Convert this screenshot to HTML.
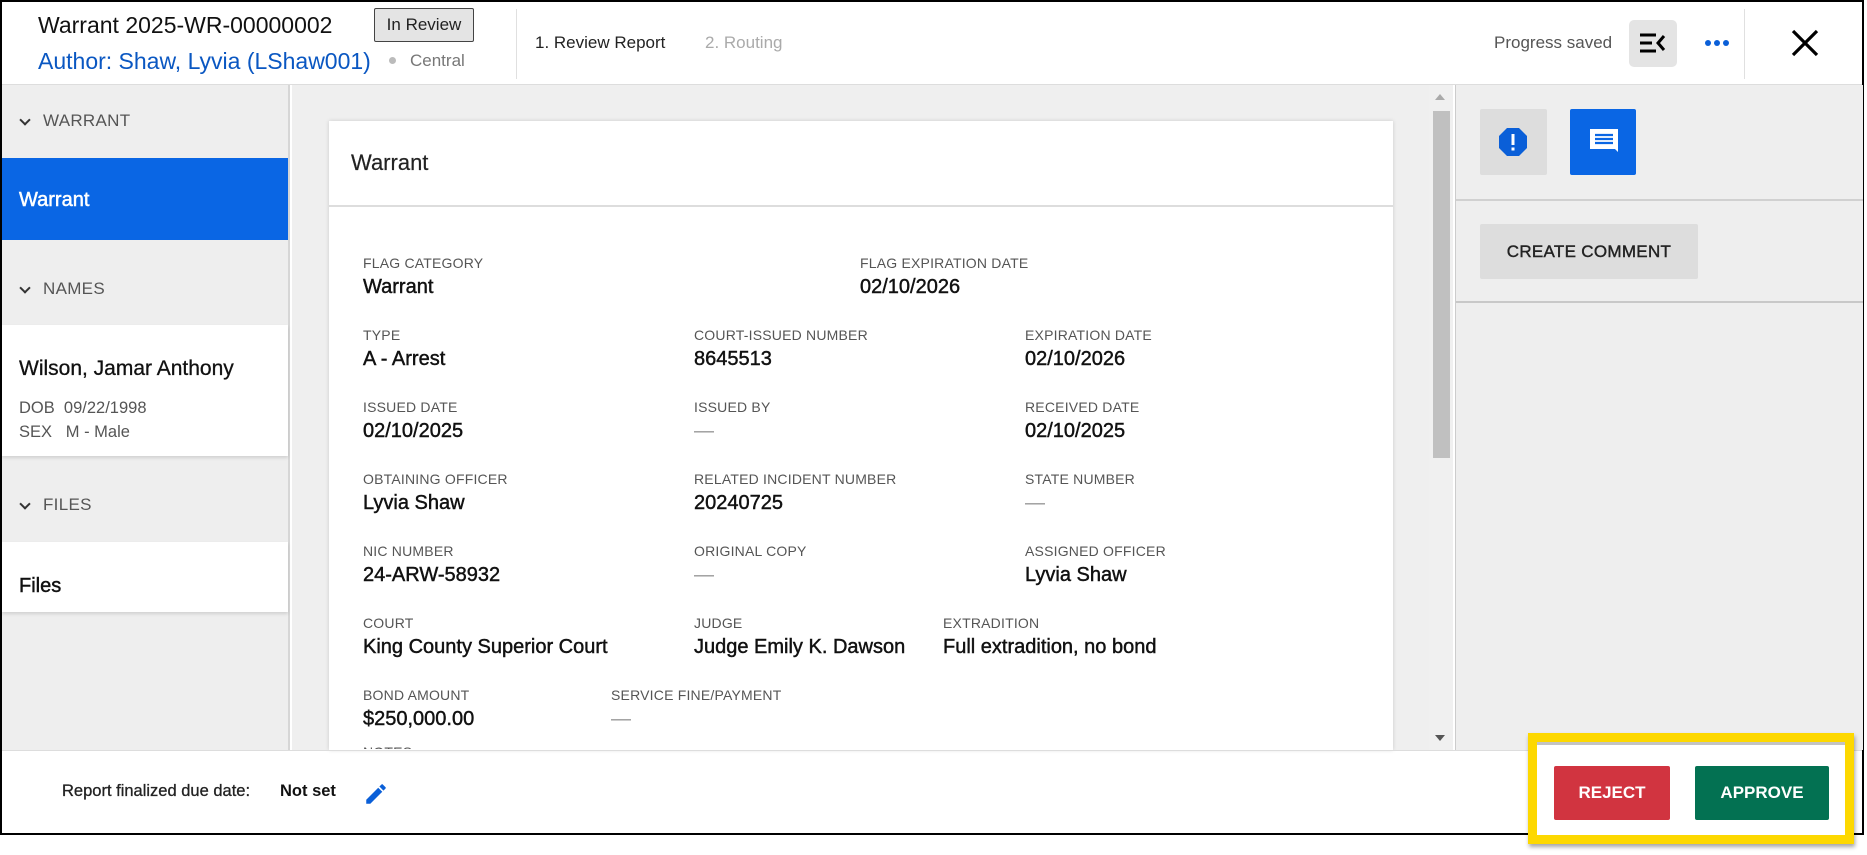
<!DOCTYPE html>
<html><head><meta charset="utf-8"><style>
*{box-sizing:border-box;margin:0;padding:0}
body{width:1867px;height:855px;background:#fff;font-family:"Liberation Sans",Arial,sans-serif;position:relative;overflow:hidden;color:#111}
.a{position:absolute;white-space:nowrap}
.lbl{position:absolute;font-size:14px;color:#555;letter-spacing:.2px;white-space:nowrap}
.val{position:absolute;font-size:20px;color:#111;-webkit-text-stroke:.45px #111;white-space:nowrap}
.dash{color:#999;-webkit-text-stroke:0}
.chev{position:absolute;width:8px;height:8px;border-right:2px solid #333;border-bottom:2px solid #333;transform:rotate(45deg)}
</style></head><body>
<div class="a" style="left:0;top:0;width:1864px;height:835px;border:2px solid #000"></div>
<!-- header -->
<div class="a" style="left:2px;top:84px;width:1860px;height:1px;background:#ddd"></div>
<div class="a" style="left:38px;top:12px;font-size:23px;color:#111">Warrant 2025-WR-00000002</div>
<div class="a" style="left:374px;top:8px;width:100px;height:34px;background:#e4e4e4;border:1px solid #444;border-radius:2px;font-size:17px;line-height:32px;text-align:center;color:#222">In Review</div>
<div class="a" style="left:38px;top:48px;font-size:23px;color:#0a57c2">Author: Shaw, Lyvia (LShaw001)</div>
<div class="a" style="left:389px;top:57px;width:7px;height:7px;border-radius:50%;background:#bbb"></div>
<div class="a" style="left:410px;top:51px;font-size:17px;color:#777">Central</div>
<div class="a" style="left:516px;top:9px;width:1px;height:70px;background:#e0e0e0"></div>
<div class="a" style="left:535px;top:33px;font-size:17px;color:#222">1. Review Report</div>
<div class="a" style="left:705px;top:33px;font-size:17px;color:#aaa">2. Routing</div>
<div class="a" style="left:1494px;top:33px;font-size:17px;color:#555">Progress saved</div>
<div class="a" style="left:1629px;top:20px;width:48px;height:47px;background:#e4e4e4;border-radius:5px"></div>
<svg class="a" style="left:1638px;top:30px" width="30" height="26" viewBox="0 0 30 26"><path d="M2 5h16M2 13h12M2 21h16" stroke="#000" stroke-width="3"/><path d="M26 6l-6 7 6 7" stroke="#000" stroke-width="3" fill="none"/></svg>
<div class="a" style="left:1705px;top:40px;width:6px;height:6px;border-radius:50%;background:#0a5fd8;box-shadow:9px 0 #0a5fd8,18px 0 #0a5fd8"></div>
<div class="a" style="left:1744px;top:9px;width:1px;height:70px;background:#e0e0e0"></div>
<svg class="a" style="left:1790px;top:28px" width="30" height="30" viewBox="0 0 30 30"><path d="M3 3L27 27M27 3L3 27" stroke="#000" stroke-width="3.2"/></svg>
<!-- left sidebar -->
<div class="a" style="left:2px;top:85px;width:288px;height:665px;background:#eee;border-right:2px solid #d6d6d6"></div>
<div class="chev" style="left:21px;top:116px"></div>
<div class="a" style="left:43px;top:111px;font-size:17px;color:#555;letter-spacing:.3px">WARRANT</div>
<div class="a" style="left:2px;top:158px;width:286px;height:82px;background:#0a66e4"></div>
<div class="a" style="left:19px;top:189px;font-size:20px;color:#fff;-webkit-text-stroke:.5px #fff">Warrant</div>
<div class="chev" style="left:21px;top:284px"></div>
<div class="a" style="left:43px;top:279px;font-size:17px;color:#555;letter-spacing:.3px">NAMES</div>
<div class="a" style="left:2px;top:325px;width:286px;height:131px;background:#fff;box-shadow:0 2px 3px rgba(0,0,0,.12)"></div>
<div class="a" style="left:19px;top:357px;font-size:21px;color:#111;-webkit-text-stroke:.3px #111">Wilson, Jamar Anthony</div>
<div class="a" style="left:19px;top:399px;font-size:16.5px;color:#555">DOB&nbsp;&nbsp;09/22/1998</div>
<div class="a" style="left:19px;top:423px;font-size:16.5px;color:#555">SEX&nbsp;&nbsp;&nbsp;M - Male</div>
<div class="chev" style="left:21px;top:500px"></div>
<div class="a" style="left:43px;top:495px;font-size:17px;color:#555;letter-spacing:.3px">FILES</div>
<div class="a" style="left:2px;top:542px;width:286px;height:70px;background:#fff;box-shadow:0 2px 3px rgba(0,0,0,.12)"></div>
<div class="a" style="left:19px;top:575px;font-size:20px;color:#111;-webkit-text-stroke:.45px #111">Files</div>
<!-- main -->
<div class="a" style="left:292px;top:85px;width:1137px;height:665px;background:#efefef"></div>
<div class="a" style="left:329px;top:121px;width:1064px;height:629px;background:#fff;box-shadow:0 0 4px rgba(0,0,0,.15)"></div>
<div class="a" style="left:351px;top:150px;font-size:22px;color:#222;-webkit-text-stroke:.2px #222">Warrant</div>
<div class="a" style="left:329px;top:205px;width:1064px;height:2px;background:#ddd"></div>
<div class="lbl" style="left:363px;top:255px">FLAG CATEGORY</div><div class="val" style="left:363px;top:276px">Warrant</div>
<div class="lbl" style="left:860px;top:255px">FLAG EXPIRATION DATE</div><div class="val" style="left:860px;top:276px">02/10/2026</div>
<div class="lbl" style="left:363px;top:327px">TYPE</div><div class="val" style="left:363px;top:348px">A - Arrest</div>
<div class="lbl" style="left:694px;top:327px">COURT-ISSUED NUMBER</div><div class="val" style="left:694px;top:348px">8645513</div>
<div class="lbl" style="left:1025px;top:327px">EXPIRATION DATE</div><div class="val" style="left:1025px;top:348px">02/10/2026</div>
<div class="lbl" style="left:363px;top:399px">ISSUED DATE</div><div class="val" style="left:363px;top:420px">02/10/2025</div>
<div class="lbl" style="left:694px;top:399px">ISSUED BY</div><div class="val dash" style="left:694px;top:420px">—</div>
<div class="lbl" style="left:1025px;top:399px">RECEIVED DATE</div><div class="val" style="left:1025px;top:420px">02/10/2025</div>
<div class="lbl" style="left:363px;top:471px">OBTAINING OFFICER</div><div class="val" style="left:363px;top:492px">Lyvia Shaw</div>
<div class="lbl" style="left:694px;top:471px">RELATED INCIDENT NUMBER</div><div class="val" style="left:694px;top:492px">20240725</div>
<div class="lbl" style="left:1025px;top:471px">STATE NUMBER</div><div class="val dash" style="left:1025px;top:492px">—</div>
<div class="lbl" style="left:363px;top:543px">NIC NUMBER</div><div class="val" style="left:363px;top:564px">24-ARW-58932</div>
<div class="lbl" style="left:694px;top:543px">ORIGINAL COPY</div><div class="val dash" style="left:694px;top:564px">—</div>
<div class="lbl" style="left:1025px;top:543px">ASSIGNED OFFICER</div><div class="val" style="left:1025px;top:564px">Lyvia Shaw</div>
<div class="lbl" style="left:363px;top:615px">COURT</div><div class="val" style="left:363px;top:636px">King County Superior Court</div>
<div class="lbl" style="left:694px;top:615px">JUDGE</div><div class="val" style="left:694px;top:636px">Judge Emily K. Dawson</div>
<div class="lbl" style="left:943px;top:615px">EXTRADITION</div><div class="val" style="left:943px;top:636px">Full extradition, no bond</div>
<div class="lbl" style="left:363px;top:687px">BOND AMOUNT</div><div class="val" style="left:363px;top:708px">$250,000.00</div>
<div class="lbl" style="left:611px;top:687px">SERVICE FINE/PAYMENT</div><div class="val dash" style="left:611px;top:708px">—</div>
<div class="lbl" style="left:363px;top:744px;height:5px;overflow:hidden">NOTES</div>
<!-- scrollbar -->
<div class="a" style="left:1429px;top:85px;width:24px;height:665px;background:#f0f0f0"></div>
<div class="a" style="left:1435px;top:94px;width:0;height:0;border-left:5px solid transparent;border-right:5px solid transparent;border-bottom:6px solid #aaa"></div>
<div class="a" style="left:1433px;top:111px;width:17px;height:347px;background:#c0c0c0"></div>
<div class="a" style="left:1435px;top:735px;width:0;height:0;border-left:5px solid transparent;border-right:5px solid transparent;border-top:6px solid #555"></div>
<!-- right panel -->
<div class="a" style="left:1455px;top:85px;width:408px;height:665px;background:#eee;border-left:1px solid #ccc"></div>
<div class="a" style="left:1480px;top:109px;width:67px;height:66px;background:#ddd;border-radius:2px"></div>
<svg class="a" style="left:1498px;top:127px" width="30" height="30" viewBox="0 0 30 30"><polygon points="9,1 21,1 29,9 29,21 21,29 9,29 1,21 1,9" fill="#0a5fd8"/><rect x="13.5" y="7" width="3" height="11" fill="#fff"/><rect x="13.5" y="20.5" width="3" height="3" fill="#fff"/></svg>
<div class="a" style="left:1570px;top:109px;width:66px;height:66px;background:#0a66e4;border-radius:2px"></div>
<svg class="a" style="left:1588px;top:127px" width="32" height="32" viewBox="0 0 32 32"><path d="M2 2h28v23l-3-3H2z" fill="#fff"/><path d="M7 8h18M7 12h18M7 16h18" stroke="#0a66e4" stroke-width="2.2"/></svg>
<div class="a" style="left:1456px;top:199px;width:407px;height:2px;background:#d0d0d0"></div>
<div class="a" style="left:1480px;top:224px;width:218px;height:55px;background:#ddd;border-radius:2px;font-size:17px;color:#222;-webkit-text-stroke:.4px #222;text-align:center;line-height:55px;letter-spacing:.3px">CREATE COMMENT</div>
<div class="a" style="left:1456px;top:301px;width:407px;height:2px;background:#c8c8c8"></div>
<!-- footer -->
<div class="a" style="left:2px;top:750px;width:1860px;height:1px;background:#ddd"></div>
<div class="a" style="left:62px;top:782px;font-size:16.5px;color:#222;-webkit-text-stroke:.3px #222">Report finalized due date:</div>
<div class="a" style="left:280px;top:782px;font-size:16.5px;color:#111;font-weight:700">Not set</div>
<svg class="a" style="left:363px;top:781px" width="26" height="26" viewBox="0 0 24 24"><path d="M3 17.25V21h3.75L17.81 9.94l-3.75-3.75L3 17.25zM20.71 7.04a1 1 0 000-1.41l-2.34-2.34a1 1 0 00-1.41 0l-1.83 1.83 3.75 3.75 1.83-1.83z" fill="#0a5fd8"/></svg>
<!-- yellow highlight -->
<div class="a" style="left:1528px;top:733px;width:326px;height:111px;border:9px solid #fdd800;background:#fff;box-shadow:1px 3px 4px rgba(0,0,0,.35)"></div>
<div class="a" style="left:1537px;top:742px;width:308px;height:3px;background:#888;opacity:.5"></div>
<div class="a" style="left:1554px;top:766px;width:116px;height:54px;background:#d13440;border-radius:2px;color:#fff;font-size:17px;font-weight:700;text-align:center;line-height:54px">REJECT</div>
<div class="a" style="left:1695px;top:766px;width:134px;height:54px;background:#037152;border-radius:2px;color:#fff;font-size:17px;font-weight:700;text-align:center;line-height:54px">APPROVE</div>
</body></html>
